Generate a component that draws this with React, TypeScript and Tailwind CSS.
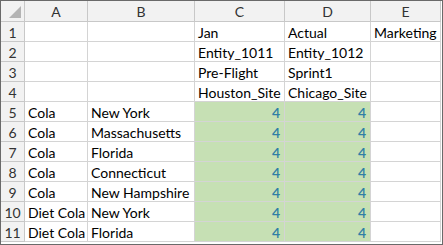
import React from "react";

const cols = ["A", "B", "C", "D", "E"];

const rows: string[][] = [
  ["", "", "Jan", "Actual", "Marketing"],
  ["", "", "Entity_1011", "Entity_1012", ""],
  ["", "", "Pre-Flight", "Sprint1", ""],
  ["", "", "Houston_Site", "Chicago_Site", ""],
  ["Cola", "New York", "4", "4", ""],
  ["Cola", "Massachusetts", "4", "4", ""],
  ["Cola", "Florida", "4", "4", ""],
  ["Cola", "Connecticut", "4", "4", ""],
  ["Cola", "New Hampshire", "4", "4", ""],
  ["Diet Cola", "New York", "4", "4", ""],
  ["Diet Cola", "Florida", "4", "4", ""],
];

export default function App() {
  return (
    <div
      className="w-[443px] h-[245px] bg-white border border-[#6a6a6a] overflow-hidden text-[14px] text-black"
      style={{ fontFamily: "Lato, 'Open Sans', sans-serif" }}
    >
      <div className="grid grid-cols-[24px_63px_107px_90px_86px_70px] grid-rows-[21px_repeat(11,20px)]">
        <div className="bg-[#f2f2f2] border-r border-b border-[#c8c8c8] flex items-end justify-end p-[3px]">
          <svg width="12" height="12" viewBox="0 0 12 12">
            <polygon points="12,0 12,12 0,12" fill="#b4b4b4" />
          </svg>
        </div>
        {cols.map((c) => (
          <div
            key={c}
            className="bg-[#f2f2f2] border-r border-b border-[#c8c8c8] flex items-center justify-center pt-[1px] text-[#333]"
          >
            {c}
          </div>
        ))}
        {rows.map((r, i) => (
          <React.Fragment key={i}>
            <div className="bg-[#f2f2f2] border-r border-b border-[#c8c8c8] flex items-center justify-center pt-[1px] text-[#333]">
              {i + 1}
            </div>
            {r.map((v, j) => {
              const num = i >= 4 && (j === 2 || j === 3);
              return (
                <div
                  key={j}
                  className={
                    num
                      ? "bg-[#c6e0b4] border-r border-b border-[#d4d4d4] flex items-center justify-end pr-[4px] pt-[1px] text-[#2f7fa6] font-semibold"
                      : "border-r border-b border-[#d4d4d4] flex items-center px-[3px] pt-[1px] whitespace-nowrap overflow-hidden"
                  }
                >
                  {v}
                </div>
              );
            })}
          </React.Fragment>
        ))}
      </div>
    </div>
  );
}
